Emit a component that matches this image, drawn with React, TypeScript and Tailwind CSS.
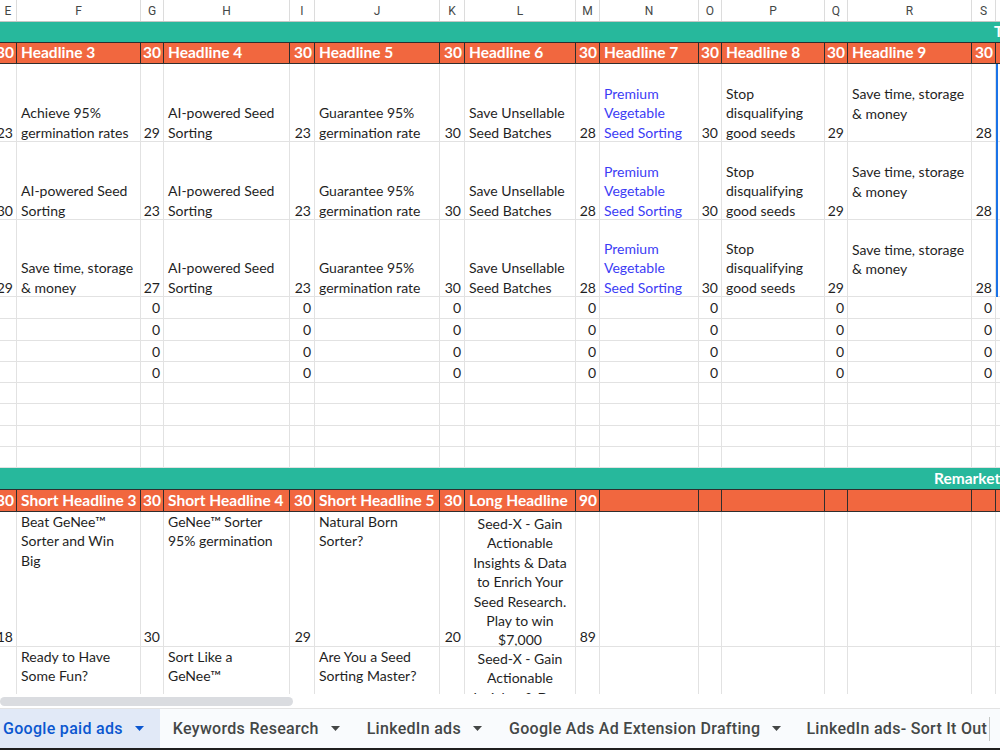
import React from "react";

const W = [
  "w-[17px]",
  "w-[124px]",
  "w-[23px]",
  "w-[126px]",
  "w-[25px]",
  "w-[125px]",
  "w-[25px]",
  "w-[111px]",
  "w-[24px]",
  "w-[99px]",
  "w-[23px]",
  "w-[103px]",
  "w-[23px]",
  "w-[124px]",
  "w-[24px]",
];

const LETTERS = ["E", "F", "G", "H", "I", "J", "K", "L", "M", "N", "O", "P", "Q", "R", "S"];

const isNum = (i: number) => i % 2 === 0;

const R1: string[] = [
  "23",
  "Achieve 95%\ngermination rates",
  "29",
  "AI-powered Seed\nSorting",
  "23",
  "Guarantee 95%\ngermination rate",
  "30",
  "Save Unsellable\nSeed Batches",
  "28",
  "Premium\nVegetable\nSeed Sorting",
  "30",
  "Stop\ndisqualifying\ngood seeds",
  "29",
  "Save time, storage\n& money",
  "28",
];
const R2: string[] = [
  "30",
  "AI-powered Seed\nSorting",
  "23",
  "AI-powered Seed\nSorting",
  "23",
  "Guarantee 95%\ngermination rate",
  "30",
  "Save Unsellable\nSeed Batches",
  "28",
  "Premium\nVegetable\nSeed Sorting",
  "30",
  "Stop\ndisqualifying\ngood seeds",
  "29",
  "Save time, storage\n& money",
  "28",
];
const R3: string[] = [
  "29",
  "Save time, storage\n& money",
  "27",
  "AI-powered Seed\nSorting",
  "23",
  "Guarantee 95%\ngermination rate",
  "30",
  "Save Unsellable\nSeed Batches",
  "28",
  "Premium\nVegetable\nSeed Sorting",
  "30",
  "Stop\ndisqualifying\ngood seeds",
  "29",
  "Save time, storage\n& money",
  "28",
];

const FONT = "font-['Lato','Open_Sans',sans-serif]";

function Lines({ text }: { text: string }) {
  const parts = text.split("\n");
  return (
    <>
      {parts.map((p, i) => (
        <div key={i} className="whitespace-nowrap">
          {p}
        </div>
      ))}
    </>
  );
}

function LetterRow() {
  return (
    <div className="flex h-[22px] shrink-0 border-b border-[#c4c7c5] bg-white font-['Roboto',sans-serif] text-[12px] text-[#444746]">
      {W.map((w, i) => (
        <div key={i} className={`${w} shrink-0 flex items-center justify-center border-r border-[#dcdcdc]`}>
          {LETTERS[i]}
        </div>
      ))}
      <div className="flex-1" />
    </div>
  );
}

function TealRow({ h, text, pad }: { h: string; text: string; pad: string }) {
  return (
    <div className={`${h} shrink-0 bg-[#27b89c] flex items-center overflow-hidden ${pad}`}>
      <span className="whitespace-nowrap text-white font-bold text-[15.5px]">{text}</span>
    </div>
  );
}

function OrangeRow({ h, cells }: { h: string; cells: string[] }) {
  return (
    <div className={`${h} shrink-0 flex bg-[#f1673f] border-y border-[#2e2e2e] text-white font-bold text-[15.5px]`}>
      {W.map((w, i) => (
        <div
          key={i}
          className={`${w} shrink-0 flex items-center overflow-hidden border-r border-[#2e2e2e] ${
            isNum(i) ? "justify-end pr-[2px]" : "pl-[4px]"
          } whitespace-nowrap`}
        >
          {cells[i] ?? ""}
        </div>
      ))}
      <div className="flex-1" />
    </div>
  );
}

function DataRow({ h, cells }: { h: string; cells: string[] }) {
  return (
    <div className={`${h} shrink-0 flex border-b border-[#e2e2e2] text-[14px] leading-[19.5px] text-[#1f1f1f]`}>
      {W.map((w, i) => {
        const t = cells[i] ?? "";
        if (isNum(i)) {
          return (
            <div key={i} className={`${w} shrink-0 flex items-end justify-end pr-[3px] overflow-hidden border-r border-[#e2e2e2]`}>
              <span className="whitespace-nowrap translate-y-[1px]">{t}</span>
            </div>
          );
        }
        const blue = i === 9;
        const mid = i === 13;
        return (
          <div
            key={i}
            className={`${w} shrink-0 flex flex-col ${mid ? "justify-center" : "justify-end"} pl-[4px] overflow-hidden border-r border-[#e2e2e2] ${
              blue ? "text-[#3c3cf5]" : ""
            }`}
          >
            <div className={mid ? "translate-y-[1px]" : "translate-y-[1px]"}>
              <Lines text={t} />
            </div>
          </div>
        );
      })}
      <div className="flex-1" />
    </div>
  );
}

function SmallRow({ h, zeros }: { h: string; zeros: boolean }) {
  return (
    <div className={`${h} shrink-0 flex border-b border-[#e2e2e2] text-[14px] text-[#1f1f1f]`}>
      {W.map((w, i) => (
        <div
          key={i}
          className={`${w} shrink-0 flex items-center justify-end pr-[3px] border-r border-[#e2e2e2]`}
        >
          {zeros && isNum(i) && i > 0 ? "0" : ""}
        </div>
      ))}
      <div className="flex-1" />
    </div>
  );
}

const A: string[] = [
  "18",
  "Beat GeNee™\nSorter and Win\nBig",
  "30",
  "GeNee™ Sorter\n95% germination",
  "29",
  "Natural Born\nSorter?",
  "20",
  "Seed-X - Gain\nActionable\nInsights & Data\nto Enrich Your\nSeed Research.\nPlay to win\n$7,000",
  "89",
];
const B: string[] = [
  "",
  "Ready to Have\nSome Fun?",
  "",
  "Sort Like a\nGeNee™",
  "",
  "Are You a Seed\nSorting Master?",
  "",
  "Seed-X - Gain\nActionable\nInsights & Data\nto Enrich Your",
  "",
];

function TopRow({ h, cells }: { h: string; cells: string[] }) {
  return (
    <div className={`${h} shrink-0 flex border-b border-[#e2e2e2] text-[14px] leading-[19.4px] text-[#1f1f1f]`}>
      {W.map((w, i) => {
        const t = cells[i] ?? "";
        if (isNum(i)) {
          return (
            <div key={i} className={`${w} shrink-0 flex items-end justify-end pr-[3px] overflow-hidden border-r border-[#e2e2e2]`}>
              <span className="whitespace-nowrap">{t}</span>
            </div>
          );
        }
        if (i === 7) {
          return (
            <div key={i} className={`${w} shrink-0 flex flex-col items-center pt-[2px] overflow-hidden border-r border-[#e2e2e2]`}>
              <Lines text={t} />
            </div>
          );
        }
        return (
          <div key={i} className={`${w} shrink-0 flex flex-col justify-start pl-[4px] overflow-hidden border-r border-[#e2e2e2]`}>
            <Lines text={t} />
          </div>
        );
      })}
      <div className="flex-1" />
    </div>
  );
}

function Tab({ label, active, arrow = true }: { label: string; active?: boolean; arrow?: boolean }) {
  return (
    <div
      className={`h-full flex items-center gap-[12px] shrink-0 ${
        active ? "bg-[#e1e9f7] text-[#0b57d0] pl-[3px] pr-[16px]" : "text-[#444746] pl-[13px] pr-[14px]"
      }`}
    >
      <span className="whitespace-nowrap">{label}</span>
      {arrow && (
        <svg width="9" height="5" viewBox="0 0 9 5" className="shrink-0">
          <path d="M0 0 L9 0 L4.5 5 Z" fill="currentColor" />
        </svg>
      )}
    </div>
  );
}

export default function App() {
  return (
    <div className={`w-[1000px] h-[750px] overflow-hidden bg-white flex flex-col ${FONT}`}>
      <div className="relative h-[694px] shrink-0 overflow-hidden flex flex-col">
        <LetterRow />
        <TealRow h="h-[20px]" text="T" pad="pl-[994px]" />
        <OrangeRow
          h="h-[22px]"
          cells={["30", "Headline 3", "30", "Headline 4", "30", "Headline 5", "30", "Headline 6", "30", "Headline 7", "30", "Headline 8", "30", "Headline 9", "30"]}
        />
        <DataRow h="h-[78px]" cells={R1} />
        <DataRow h="h-[78px]" cells={R2} />
        <DataRow h="h-[77px]" cells={R3} />
        <SmallRow h="h-[22px]" zeros />
        <SmallRow h="h-[22px]" zeros />
        <SmallRow h="h-[21px]" zeros />
        <SmallRow h="h-[21px]" zeros />
        <SmallRow h="h-[21px]" zeros={false} />
        <SmallRow h="h-[22px]" zeros={false} />
        <SmallRow h="h-[21px]" zeros={false} />
        <SmallRow h="h-[21px]" zeros={false} />
        <TealRow h="h-[21px]" text="Remarketing" pad="pl-[934px]" />
        <OrangeRow
          h="h-[23px]"
          cells={["30", "Short Headline 3", "30", "Short Headline 4", "30", "Short Headline 5", "30", "Long Headline", "90", "", "", "", "", "", ""]}
        />
        <TopRow h="h-[135px]" cells={A} />
        <TopRow h="h-[100px]" cells={B} />
        <div className="absolute left-[996px] top-[64px] w-[2px] h-[233px] bg-[#1a73e8]" />
      </div>
      <div className="h-[14px] shrink-0 bg-white flex items-center">
        <div className="w-[293px] h-[9px] rounded-full bg-[#dadce0]" />
      </div>
      <div className="h-[40px] shrink-0 border-t border-[#e3e3e3] bg-[#f9fbfd] flex font-['Roboto',sans-serif] text-[16px] font-medium tracking-[0.3px]">
        <Tab label="Google paid ads" active />
        <Tab label="Keywords Research" />
        <Tab label="LinkedIn ads" />
        <Tab label="Google Ads Ad Extension Drafting" />
        <div className="h-full flex items-center pl-[11px] text-[#444746] shrink-0">
          <span className="whitespace-nowrap border-r border-[#c4c7c5] pr-[2px]">LinkedIn ads- Sort It Out</span>
        </div>
      </div>
      <div className="flex-1 bg-[#1f1f1f]" />
    </div>
  );
}
